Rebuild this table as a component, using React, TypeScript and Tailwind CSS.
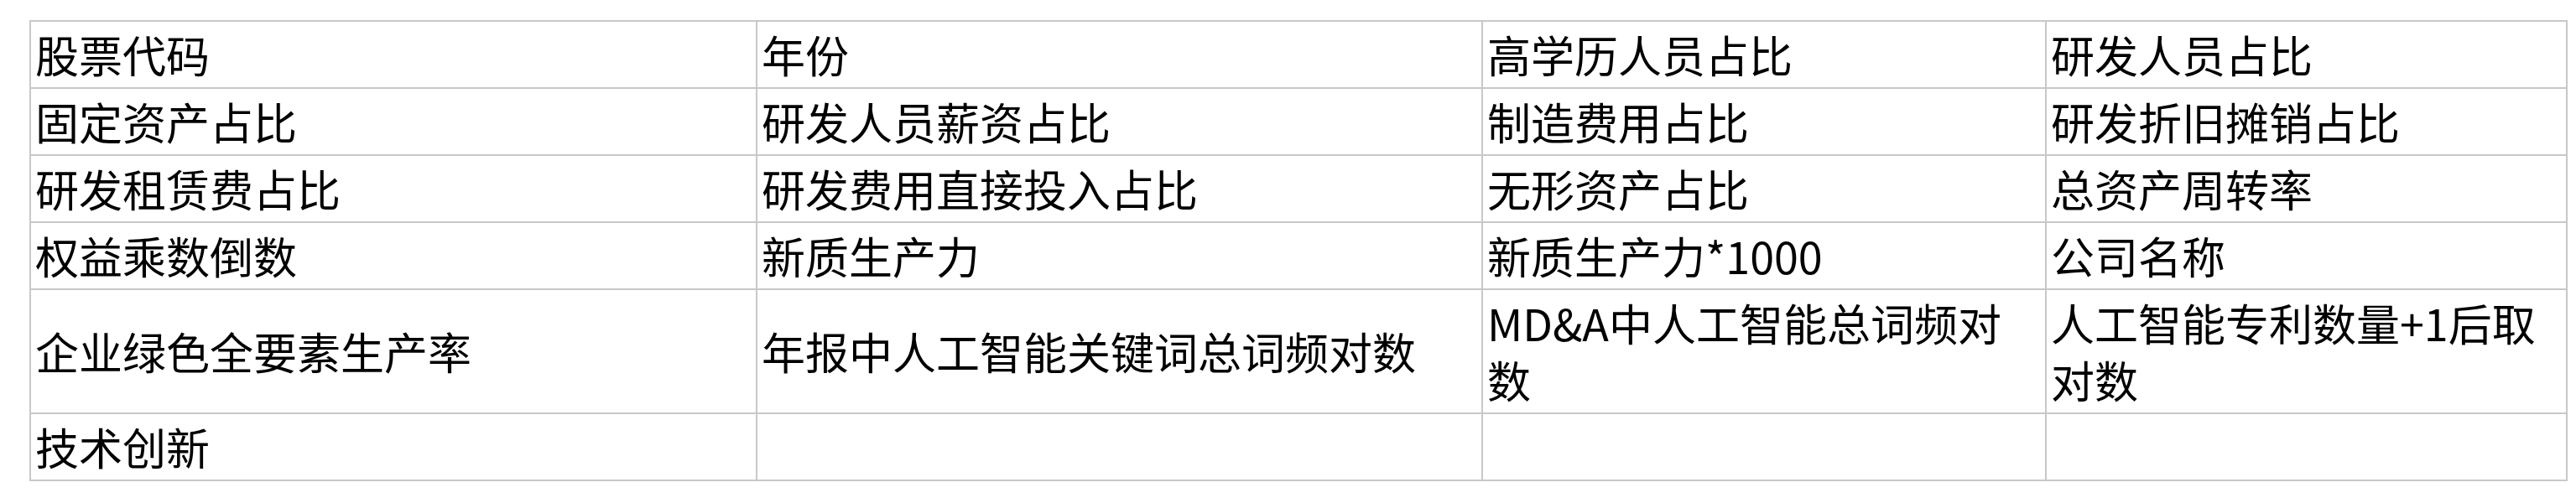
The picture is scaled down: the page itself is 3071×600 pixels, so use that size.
const rows: string[][] = [
  ["股票代码", "年份", "高学历人员占比", "研发人员占比"],
  ["固定资产占比", "研发人员薪资占比", "制造费用占比", "研发折旧摊销占比"],
  ["研发租赁费占比", "研发费用直接投入占比", "无形资产占比", "总资产周转率"],
  ["权益乘数倒数", "新质生产力", "新质生产力*1000", "公司名称"],
  [
    "企业绿色全要素生产率",
    "年报中人工智能关键词总词频对数",
    "MD&A中人工智能总词频对数",
    "人工智能专利数量+1后取对数",
  ],
  ["技术创新", "", "", ""],
];

export default function App() {
  return (
    <div className="min-h-[600px] w-[3071px] bg-white pl-[35px] pt-[24px]">
      <table
        className="w-[3024px] table-fixed border-collapse text-[52px] leading-[68px] text-black"
        style={{ fontFamily: '"Microsoft YaHei", "Noto Sans CJK SC", "Noto Sans", sans-serif' }}
      >
        <colgroup>
          <col className="w-[866px]" />
          <col className="w-[865px]" />
          <col className="w-[672px]" />
          <col className="w-[621px]" />
        </colgroup>
        <tbody>
          {rows.map((row, i) => (
            <tr key={i}>
              {row.map((cell, j) => (
                <td
                  key={j}
                  className="border-2 border-[#c8c8c8] px-[5px] py-[5px] align-middle"
                >
                  {cell || "\u00a0"}
                </td>
              ))}
            </tr>
          ))}
        </tbody>
      </table>
    </div>
  );
}
